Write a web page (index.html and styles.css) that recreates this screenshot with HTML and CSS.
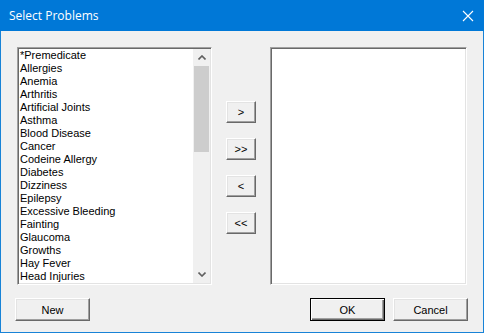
FILE: index.html
```html
<!DOCTYPE html>
<html lang="en">
<head>
    <meta charset="UTF-8">
    <title>Select Problems</title>
    <link rel="stylesheet" href="styles.css">
</head>
<body>
    <div class="window">
        <div class="titlebar">
            <span class="title">Select Problems</span>
            <svg class="close" width="12" height="12" viewBox="0 0 12 12">
                <path d="M1 1 L11 11 M11 1 L1 11" stroke="#fff" stroke-width="1.1" fill="none"/>
            </svg>
        </div>

        <div class="main">
            <div class="listbox left">
                <ul class="items">
                    <li>*Premedicate</li>
                    <li>Allergies</li>
                    <li>Anemia</li>
                    <li>Arthritis</li>
                    <li>Artificial Joints</li>
                    <li>Asthma</li>
                    <li>Blood Disease</li>
                    <li>Cancer</li>
                    <li>Codeine Allergy</li>
                    <li>Diabetes</li>
                    <li>Dizziness</li>
                    <li>Epilepsy</li>
                    <li>Excessive Bleeding</li>
                    <li>Fainting</li>
                    <li>Glaucoma</li>
                    <li>Growths</li>
                    <li>Hay Fever</li>
                    <li>Head Injuries</li>
                </ul>
                <div class="scrollbar">
                    <div class="arrow">
                        <svg width="8" height="5" viewBox="0 0 8 5"><path d="M0.5 4.5 L4 1 L7.5 4.5" stroke="#606060" stroke-width="1.6" fill="none"/></svg>
                    </div>
                    <div class="track">
                        <div class="thumb"></div>
                    </div>
                    <div class="arrow">
                        <svg width="8" height="5" viewBox="0 0 8 5"><path d="M0.5 0.5 L4 4 L7.5 0.5" stroke="#606060" stroke-width="1.6" fill="none"/></svg>
                    </div>
                </div>
            </div>

            <div class="movers">
                <button class="btn small">&gt;</button>
                <button class="btn small">&gt;&gt;</button>
                <button class="btn small">&lt;</button>
                <button class="btn small">&lt;&lt;</button>
            </div>

            <div class="listbox right"></div>
        </div>

        <div class="footer">
            <button class="btn wide">New</button>
            <div class="actions">
                <button class="btn wide default">OK</button>
                <button class="btn wide">Cancel</button>
            </div>
        </div>
    </div>
</body>
</html>
```

FILE: styles.css
```css
html, body {
    margin: 0;
    padding: 0;
}
body {
    width: 484px;
    height: 333px;
    overflow: hidden;
    font-family: "Liberation Sans", Arial, sans-serif;
    font-size: 11px;
    color: #000;
}
.window {
    width: 484px;
    height: 333px;
    box-sizing: border-box;
    background: #f0f0f0;
    border: 1px solid #1883d7;
    border-top: none;
}
.titlebar {
    height: 31px;
    margin: 0 -1px;
    background: #0078d7;
    display: flex;
    align-items: center;
    justify-content: space-between;
    padding: 0 10px 0 9px;
}
.title {
    color: #fff;
    font-family: "Open Sans", "Noto Sans", sans-serif;
    font-size: 12px;
    margin-top: -1px;
}
.close {
    display: block;
}

.main {
    display: flex;
    padding: 16px 0 0 16px;
}
.listbox {
    height: 238px;
    box-sizing: border-box;
    background: #fff;
    border: 1px solid;
    border-color: #a0a0a0 #fff #fff #a0a0a0;
    box-shadow: inset 1px 1px 0 #696969, inset -1px -1px 0 #e3e3e3;
    padding: 1px;
    display: flex;
}
.left {
    width: 195px;
}
.right {
    width: 197px;
}
.items {
    list-style: none;
    margin: 0;
    padding: 0 0 0 1px;
    flex: 1;
    overflow: hidden;
}
.items li {
    height: 13px;
    line-height: 13px;
    white-space: nowrap;
}
.scrollbar {
    width: 17px;
    display: flex;
    flex-direction: column;
    background: #f0f0f0;
}
.arrow {
    height: 17px;
    display: flex;
    align-items: center;
    justify-content: center;
}
.arrow svg {
    display: block;
}
.track {
    flex: 1;
}
.thumb {
    height: 86px;
    margin: 0 1px;
    background: #cdcdcd;
}

.movers {
    width: 58px;
    display: flex;
    flex-direction: column;
    align-items: center;
    padding-top: 54px;
    gap: 15px;
}

.btn {
    box-sizing: border-box;
    background: #f0f0f0;
    border: 1px solid;
    border-color: #fff #696969 #696969 #fff;
    box-shadow: inset -1px -1px 0 #a0a0a0, inset 1px 1px 0 #e3e3e3;
    font-family: "Liberation Sans", Arial, sans-serif;
    font-size: 11px;
    color: #000;
    padding: 0;
    cursor: pointer;
}
.small {
    width: 30px;
    height: 22px;
}
.wide {
    width: 75px;
    height: 23px;
}
.default {
    border-color: #000;
    box-shadow: inset 1px 1px 0 #fff, inset -1px -1px 0 #696969, inset -2px -2px 0 #a0a0a0;
}

.footer {
    display: flex;
    justify-content: space-between;
    padding: 13px 15px 0 14px;
}
.actions {
    display: flex;
    gap: 8px;
}
```
